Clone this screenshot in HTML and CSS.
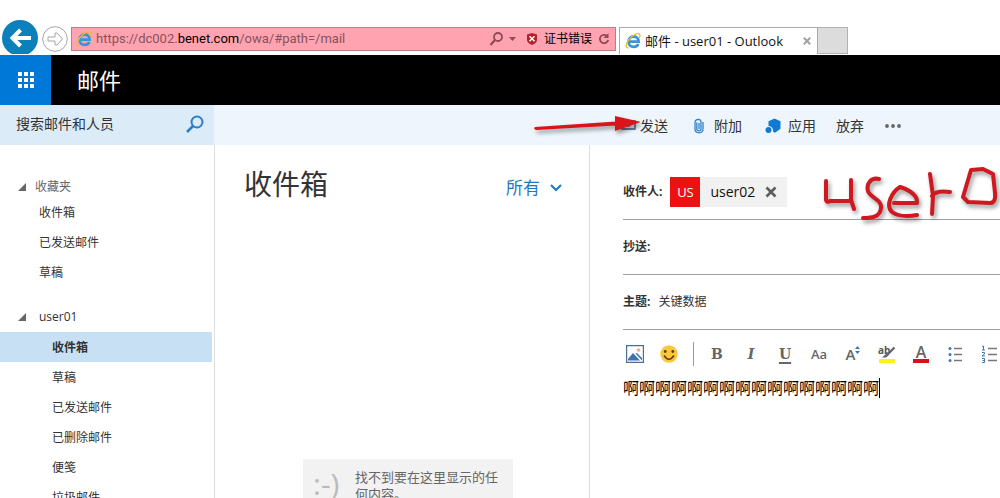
FILE: index.html
```html
<!DOCTYPE html>
<html lang="zh-CN">
<head>
<meta charset="utf-8">
<title>邮件 - user01 - Outlook</title>
<link rel="stylesheet" href="styles.css">
</head>
<body>
<svg class="defs" aria-hidden="true">
  <symbol id="ie" viewBox="0 0 16 16">
    <path d="M4 8.600h9.600c0-3-2-5.100-4.900-5.100S3.500 5.700 3.500 8.700s2.200 5.100 5.200 5.100c2.200 0 3.900-1.100 4.600-2.900" fill="none" stroke="#3b93d8" stroke-width="2.800"/>
    <path d="M3.600 14.900C.4 15.200.6 11.500 3.200 7.600 6 3.400 11.500-.2 14 .9c1.300.6 1.200 2.200.3 4" fill="none" stroke="#e8bf2c" stroke-width="1.400"/>
  </symbol>
</svg>

<div class="browser">
  <button class="back" aria-label="返回"><svg viewBox="0 0 38 34"><circle cx="19" cy="18" r="18" fill="#0c80bb"/><path d="M30 18H12M19.500 10l-8 8 8 8" fill="none" stroke="#fff" stroke-width="4"/></svg></button>
  <button class="forward" aria-label="前进"><svg viewBox="0 0 26 26"><circle cx="13" cy="13" r="12.300" fill="#fff" stroke="#a5a5a5"/><path d="M6 11h7V7h2l5.500 6-5.500 6h-2v-4H6z" fill="none" stroke="#a5a5a5"/></svg></button>
  <div class="address">
    <svg class="ie"><use href="#ie"/></svg>
    <span class="url">https://dc002.<b>benet.com</b>/owa/#path=/mail</span>
    <button class="bar-search" aria-label="搜索"><svg viewBox="0 0 28 16"><circle cx="9" cy="6" r="4" fill="none" stroke="#8d4b55" stroke-width="1.800"/><path d="M6 9l-4.500 5" stroke="#8d4b55" stroke-width="2.200"/><path d="M20 6h7l-3.500 4z" fill="#8d4b55"/></svg></button>
    <button class="cert"><svg viewBox="0 0 12 14"><path d="M6 1l5 1.500v5C11 10.500 8.500 12 6 13 3.500 12 1 10.500 1 7.500v-5z" fill="#b51f2b"/><path d="M3.500 4.300l5 5M8.500 4.300l-5 5" stroke="#fff" stroke-width="1.600"/></svg>证书错误</button>
    <button class="reload" aria-label="刷新"><svg viewBox="0 0 12 14"><path d="M9.500 4.500A4.200 4.200 0 1 0 10.200 8" fill="none" stroke="#8d4b55" stroke-width="1.800"/><path d="M10.500 1v5h-5z" fill="#8d4b55"/></svg></button>
  </div>
  <div class="tab"><svg class="ie"><use href="#ie"/></svg><span>邮件 - user01 - Outlook</span><button class="tab-close" aria-label="关闭标签页"><svg viewBox="0 0 8 8"><path d="M.8.8l6.400 6.400M7.200.8L.8 7.200" stroke="#a2a2a2" stroke-width="2"/></svg></button></div>
  <button class="new-tab" aria-label="新建标签页"></button>
</div>

<header class="suite">
  <button class="launcher" aria-label="应用启动器"><svg viewBox="0 0 16 16"><path d="M0 0h4v4H0zM6 0h4v4H6zM12 0h4v4h-4zM0 6h4v4H0zM6 6h4v4H6zM12 6h4v4h-4zM0 12h4v4H0zM6 12h4v4H6zM12 12h4v4h-4z" fill="#fff"/></svg></button>
  <h1>邮件</h1>
</header>

<div class="commands">
  <form class="search">
    <input type="search" aria-label="搜索邮件和人员" placeholder="搜索邮件和人员">
    <button type="button" aria-label="搜索"><svg viewBox="0 0 18 18"><circle cx="11" cy="7" r="5.500" fill="none" stroke="#2f7fc6" stroke-width="2"/><path d="M7 11l-6 6" stroke="#2f7fc6" stroke-width="2.600"/></svg></button>
  </form>
  <div class="actions">
    <button class="send"><svg viewBox="0 0 15 12"><path d="M1 1h13v8H1zM1 1l6.500 5L14 1" fill="none" stroke="#3d6285" stroke-width="1.400"/></svg>发送</button>
    <button class="attach"><svg viewBox="0 0 12 16"><path d="M3.800 4.500v6.300a2 2 0 0 0 4.200 0V4a2.800 2.800 0 0 0-2.500-2.700C3.300 1.300 2 2.500 2 4.500v6.300c0 2.500 1.500 4 4 4s4-1.500 4-4V4M6 5v6" fill="none" stroke="#2f83c8" stroke-width="1.300"/></svg>附加</button>
    <button class="apps"><svg viewBox="0 0 16 16"><path d="M9.500.5l6 2.800v7.400l-5.500 4-2-1A4.500 4.500 0 0 0 3.500 8V3.300z" fill="#1279d3"/><circle cx="3.500" cy="12" r="3" fill="#1279d3"/></svg>应用</button>
    <button>放弃</button>
    <button class="more" aria-label="更多"><svg viewBox="0 0 16 4"><circle cx="2" cy="2" r="1.900"/><circle cx="8" cy="2" r="1.900"/><circle cx="14" cy="2" r="1.900"/></svg></button>
  </div>
  <svg class="arrow" viewBox="0 0 110 30" aria-hidden="true"><path d="M5 16L86 10.500v4L6 19q-3-1-1-3zM85 5l26 6-26 9z" fill="#d9151a"/></svg>
</div>

<main>
  <nav class="sidebar">
    <h2 class="muted"><svg viewBox="0 0 8 8"><path d="M8 0v8H0z"/></svg>收藏夹</h2>
    <ul class="favorites">
      <li><a href="#">收件箱</a></li>
      <li><a href="#">已发送邮件</a></li>
      <li><a href="#">草稿</a></li>
    </ul>
    <h2 class="account"><svg viewBox="0 0 8 8"><path d="M8 0v8H0z"/></svg>user01</h2>
    <ul class="folders">
      <li><a href="#" class="selected">收件箱</a></li>
      <li><a href="#">草稿</a></li>
      <li><a href="#">已发送邮件</a></li>
      <li><a href="#">已删除邮件</a></li>
      <li><a href="#">便笺</a></li>
      <li><a href="#">垃圾邮件</a></li>
    </ul>
  </nav>

  <section class="list">
    <div class="list-head">
      <h2>收件箱</h2>
      <button class="filter">所有<svg viewBox="0 0 12 8"><path d="M1 1l5 5 5-5" fill="none" stroke="#1a78c8" stroke-width="2"/></svg></button>
    </div>
    <div class="empty"><span class="face">:-)</span><p>找不到要在这里显示的任何内容。</p></div>
  </section>

  <section class="compose">
    <div class="field">
      <span class="label">收件人:</span>
      <span class="chip"><span class="avatar">US</span><span class="name">user02</span><button aria-label="移除 user02"><svg viewBox="0 0 12 12"><path d="M1.500 1.500l9 9M10.500 1.500l-9 9" stroke="#5c5c5c" stroke-width="2.600"/></svg></button></span>
    </div>
    <div class="field"><label class="label" for="cc">抄送:</label><input id="cc" type="text"></div>
    <div class="field"><label class="label" for="subject">主题:</label><input id="subject" type="text" value="关键数据"></div>
    <div class="format">
      <button aria-label="插入图片"><svg class="pic" viewBox="0 0 18 18"><path d="M.6.6h16.800v16.800H.6z" fill="#fff" stroke="#4e6e8e" stroke-width="1.200"/><path d="M2 15.500V14l5-6 7 7.500zM9.500 8.500L11 8l5 5v2.500z" fill="#3d73b0"/><circle cx="12.500" cy="5" r="1.800" fill="#f0b27a"/></svg></button>
      <button aria-label="表情"><svg class="pic" viewBox="0 0 18 18"><circle cx="9" cy="9" r="8.700" fill="#fbc73c"/><circle cx="5.200" cy="6.500" r="1.400" fill="#5d3b10"/><circle cx="12.800" cy="6.500" r="1.400" fill="#5d3b10"/><path d="M4 10.500q5 7.500 10 0" fill="none" stroke="#5d3b10" stroke-width="1.500"/></svg></button>
      <span class="divider"></span>
      <button class="slab" aria-label="加粗">B</button>
      <button class="slab italic" aria-label="倾斜">I</button>
      <button class="slab underline" aria-label="下划线">U</button>
      <button class="case" aria-label="字体">Aa</button>
      <button class="size" aria-label="字号">A<svg viewBox="0 0 5 8"><path d="M0 3l2.500-3L5 3zM0 5l2.500 3L5 5z" fill="#3f7ab5"/></svg></button>
      <button aria-label="突出显示"><svg class="pic" viewBox="0 0 18 18"><path d="M1 14h16v4H1z" fill="#fff21c"/><text x="0" y="9" class="mark">ab</text><path d="M16.500 2.500l-7 7" stroke="#666" stroke-width="2.400"/><path d="M9 8l2 2-3 2.500H4z" fill="#666"/></svg></button>
      <button class="color" aria-label="字体颜色">A</button>
      <button aria-label="项目符号"><svg class="pic" viewBox="0 0 18 18"><path d="M8 3.500h8M8 9.500h8M8 15.500h8" stroke="#777" stroke-width="1.300"/><g fill="#3f7ab5"><circle cx="4" cy="3.500" r="1.500"/><circle cx="4" cy="9.500" r="1.500"/><circle cx="4" cy="15.500" r="1.500"/></g></svg></button>
      <button aria-label="编号"><svg class="pic" viewBox="0 0 18 18"><path d="M8 3.500h9M8 9.500h9M8 15.500h9" stroke="#777" stroke-width="1.300"/><path d="M2 2l1.500-1v4M2 5h3M2 7.500h2.500v1.500L2 11h3M2 13.500h2.500v4H2M2.500 15.500h2" fill="none" stroke="#3f7ab5"/></svg></button>
    </div>
    <div class="body" contenteditable="true" role="textbox" aria-label="正文">啊啊啊啊啊啊啊啊啊啊啊啊啊啊啊啊<span class="caret"></span></div>
    <svg class="scrawl" viewBox="820 160 180 70" aria-hidden="true"><path d="M826 181v19q1 3 4 1h21M851 180v20l3 9M879 179c-8-2-13 5-11 12s14 8 13 17-9 10-18 10M894 203h23q1-10-17-16c-8 5-15 18-8 25q8 6 25 3M930 174l3 22-1 18M932 196q4-6 18-4M971 170l-8 27 5 5 22 1q6 0 5-10l-2-19-10-5z"/></svg>
  </section>
</main>
</body>
</html>
```

FILE: styles.css
```css
* { box-sizing: border-box; }
body {
  margin: 0;
  height: 100vh;
  overflow: hidden;
  display: flex;
  flex-direction: column;
  background: #fff;
  color: #333;
  font: 12px/20px "Open Sans", "Noto Sans CJK SC", sans-serif;
}
button {
  display: flex;
  align-items: center;
  flex: none;
  padding: 0;
  border: 0;
  background: none;
  color: inherit;
  font: inherit;
}
input {
  min-width: 0;
  flex: 1;
  padding: 0;
  border: 0;
  outline: 0;
  background: none;
  color: inherit;
  font: inherit;
}
h1, h2, p, ul { margin: 0; padding: 0; font-weight: 400; }
ul { list-style: none; }
a { color: inherit; text-decoration: none; }
svg { display: block; flex: none; }
.defs { position: absolute; width: 0; height: 0; }
.ie { width: 16px; height: 16px; }

.browser { display: flex; flex: none; height: 55px; padding: 20px 0 0 1px; }
.back svg { width: 38px; height: 34px; }
.back { align-self: flex-start; }
.forward { align-self: flex-start; margin: 6px 3px 0; }
.forward svg { width: 26px; height: 26px; }
.address {
  display: flex;
  align-items: center;
  width: 545px;
  height: 24px;
  margin-top: 7px;
  padding: 0 5px 0 4px;
  border: 1px solid #bd7c86;
  background: #ffa3b0;
}
.url { flex: 1; margin-left: 4px; color: #87525c; font-family: Roboto, sans-serif; font-size: 13px; white-space: nowrap; }
.url b { color: #000; font-weight: 400; }
.bar-search svg { width: 28px; height: 16px; }
.cert { gap: 6px; margin: 0 6px 0 9px; color: #000; }
.cert svg, .reload svg { width: 12px; height: 14px; }
.tab {
  display: flex;
  align-items: center;
  gap: 4px;
  width: 199px;
  height: 27px;
  margin: 7px 0 0 3px;
  padding: 0 6px 0 5px;
  border: 1px solid #aaa;
  border-bottom: 0;
  color: #111;
  font-size: 13px;
  white-space: nowrap;
}
.tab-close { margin-left: auto; }
.tab-close svg { width: 8px; height: 8px; }
.new-tab { width: 30px; height: 27px; margin-top: 7px; border: 1px solid #b2b2b2; border-left: 0; background: #dcdcdc; }

.suite { display: flex; flex: none; height: 50px; background: #000; color: #fff; }
.launcher { justify-content: center; width: 51px; background: #0078d7; }
.launcher svg { width: 16px; height: 16px; }
.suite h1 { margin-left: 26px; font-size: 22px; line-height: 50px; }

.commands { position: relative; display: flex; flex: none; height: 40px; background: #eef5fc; }
.search { display: flex; align-items: center; flex: none; width: 214px; padding: 0 10px 2px 16px; background: #dcebf8; font-size: 14px; }
.search input::placeholder { color: #333; opacity: 1; }
.search svg { width: 18px; height: 18px; }
.actions { display: flex; padding: 2px 0 0 407px; font-size: 14px; white-space: nowrap; }
.send { gap: 4px; margin-right: 25px; }
.send svg { width: 15px; height: 12px; }
.attach { gap: 9px; margin-right: 23px; }
.attach svg { width: 12px; height: 16px; }
.apps { gap: 7px; margin-right: 20px; }
.apps svg { width: 16px; height: 16px; }
.more { margin-left: 21px; fill: #666; }
.more svg { width: 16px; height: 4px; }
.arrow { position: absolute; left: 530px; top: 6px; width: 110px; height: 30px; filter: drop-shadow(2px 3px 2px #0006); }

main { display: flex; flex: 1; min-height: 0; }
.sidebar { flex: none; width: 215px; padding-top: 32px; border-right: 1px solid #ddd; overflow: hidden; }
.sidebar h2 { display: flex; align-items: center; gap: 9px; height: 20px; padding-left: 18px; font-size: 12px; }
.sidebar h2 svg { width: 8px; height: 8px; fill: #666; }
.sidebar .muted { color: #666; }
.sidebar .account { gap: 13px; height: 30px; margin-top: 15px; }
.sidebar li a { display: block; height: 30px; margin-right: 2px; line-height: 32px; }
.favorites a { padding-left: 39px; }
.folders a { padding-left: 52px; }
.selected { background: #c7e0f4; font-weight: 700; }

.list { flex: none; width: 375px; border-right: 1px solid #ddd; overflow: hidden; }
.list-head { display: flex; justify-content: space-between; padding: 18px 27px 0 29px; }
.list h2 { font-size: 28px; line-height: 42px; }
.filter { gap: 10px; padding-top: 8px; color: #1a78c8; font-size: 17px; }
.filter svg { width: 12px; height: 8px; }
.empty { display: flex; gap: 12px; width: 210px; margin: 254px auto 0 88px; padding: 10px 12px 20px 10px; background: #f2f2f2; color: #666; font-size: 13px; line-height: 17px; }
.face { flex: none; width: 30px; color: #bbb; font-size: 30px; line-height: 30px; }

.compose { position: relative; flex: 1; min-width: 0; padding: 20px 0 0 33px; overflow: hidden; }
.field { display: flex; align-items: center; gap: 8px; height: 55px; border-bottom: 1px solid #a0a0a0; }
.label { font-weight: 700; }
.chip { display: flex; align-items: center; width: 117px; height: 30px; background: #f1f1f1; color: #111; font-size: 14px; }
.avatar { width: 30px; background: #ee1111; color: #fff; font-size: 13px; line-height: 30px; text-align: center; }
.name { margin: 0 auto; }
.chip button { margin-right: 10px; }
.chip svg { width: 12px; height: 12px; }
.format { display: flex; align-items: center; height: 48px; margin-left: -5px; color: #666; }
.format button { justify-content: center; width: 34px; height: 24px; }
.pic { width: 18px; height: 18px; }
.divider { flex: none; width: 1px; height: 24px; margin: 0 6px 0 7px; background: #999; }
.format .slab { font: 700 14px/20px "DejaVu Serif", serif; }
.format .italic { font-style: italic; }
.format .underline { text-decoration: underline; text-underline-offset: 3px; text-decoration-thickness: 2px; }
.format .case { font-size: 13px; font-weight: 600; }
.format .size { font-size: 15px; font-weight: 600; }
.size svg { width: 5px; height: 8px; margin-bottom: 8px; }
.mark { font: 700 10px "Open Sans", sans-serif; fill: #555; }
.format .color { width: 16px; height: 18px; margin: 0 9px; border-bottom: 4px solid #d9101a; font-size: 16px; line-height: 16px; font-weight: 600; }
.body { display: flex; align-items: center; height: 20px; outline: 0; color: #000; font-size: 16px; white-space: nowrap; }
.caret { width: 1px; height: 20px; background: #000; }
.scrawl { position: absolute; left: 230px; top: 15px; width: 180px; height: 70px; fill: none; stroke: #d01820; stroke-width: 4; stroke-linecap: round; stroke-linejoin: round; filter: drop-shadow(2px 3px 2px #0006); }
```
